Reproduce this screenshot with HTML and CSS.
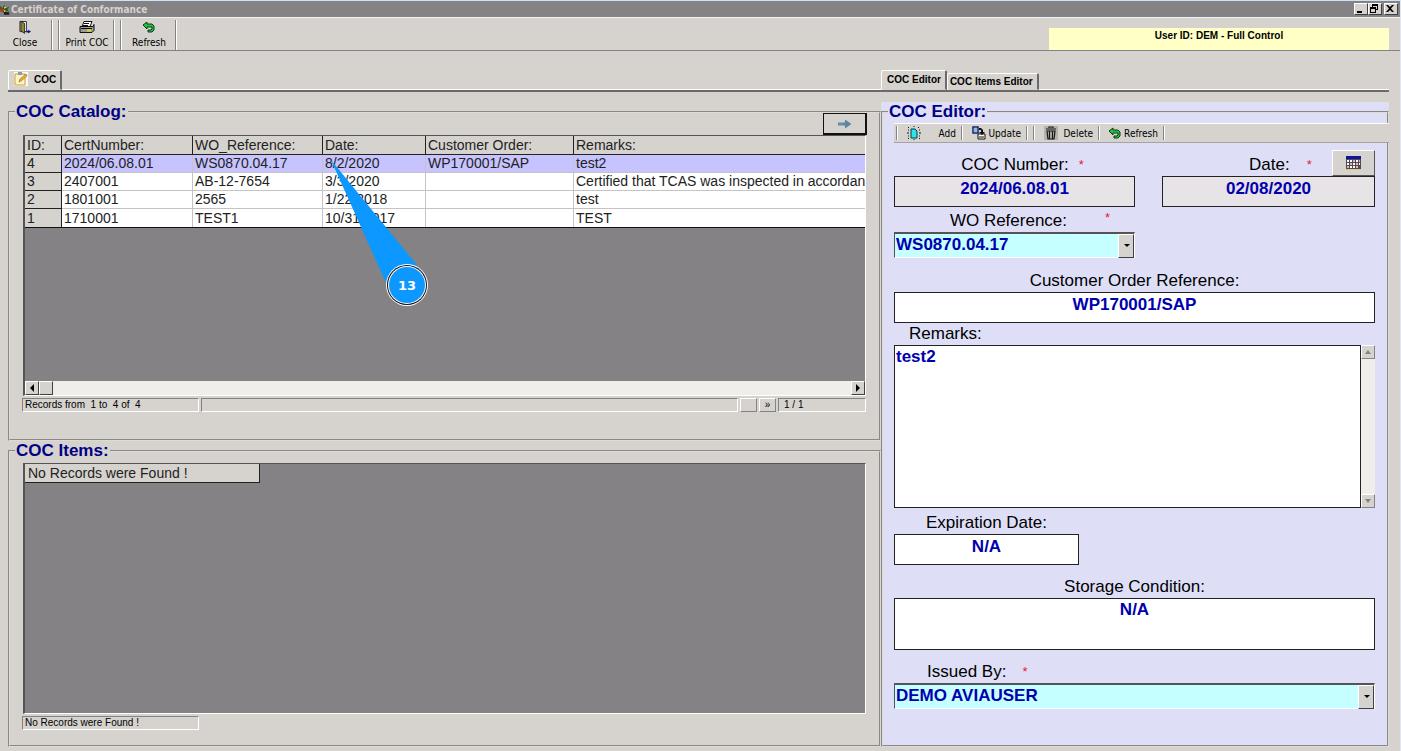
FILE: index.html
```
<!DOCTYPE html>
<html lang="en">
<head>
  <meta charset="UTF-8" />
  <meta name="viewport" content="width=device-width, initial-scale=1.0" />
  <title>Certificate of Conformance</title>
  <link rel="stylesheet" href="styles.css">
</head>
<body>
  <!-- shared icons -->
  <svg class="icon-defs" aria-hidden="true">
    <symbol id="icon-refresh" viewBox="0 0 12 12">
      <path d="M0 4l4-3v2h5l2 2v4l-2 2H5V9h3l1-1V6H4v2z" fill="#21c342" stroke="#0a3a14" stroke-width="1" />
    </symbol>
  </svg>

  <header class="title-bar">
    <svg class="app-icon" viewBox="0 0 12 14">
      <path d="M0 3l3 3 2-4 2 4 4-2-2 4 2 2-5-1-2 2-4-4z" fill="#2c5a1e" />
      <path d="M4 9l4 2 3 0v3H5z" fill="#1c1c1c" />
      <path d="M1 6l3 1-1 4-3-1z" fill="#c9301c" />
      <path d="M5 4l3 1-3 2zM4 8l3 1-2 2z" fill="#e6d84a" />
    </svg>
    <h1>Certificate of Conformance</h1>
    <div class="window-buttons">
      <button aria-label="Minimize"><svg viewBox="0 0 10 9"><path d="M2 7h5v2H2z" /></svg></button>
      <button aria-label="Restore"><svg viewBox="0 0 10 9"><path d="M3 0h6v6H7V5h1V2H4v1H3zM1 3h6v6H1zM2 5v3h4V5z" fill-rule="evenodd" /></svg></button>
      <button class="close" aria-label="Close window"><svg viewBox="0 0 10 9"><path d="M1 1h2l2 2 2-2h2L6 4.500l3 3.500H7L5 6 3 8H1l3-3.500z" /></svg></button>
    </div>
  </header>

  <div class="toolbar">
    <button class="tool">
      <svg viewBox="0 0 13 14">
        <path d="M1 1h7v11H1z" fill="#fff" stroke="#222" />
        <path d="M2 1l4 2v11l-4-3z" fill="#8c8a2c" stroke="#111" stroke-width="0.8" />
        <path d="M8 9v2h2v-1l3 2-3 2v-1H8z" fill="#10149c" />
      </svg>
      Close
    </button>
    <i class="sep"></i><i class="sep wide"></i>
    <button class="tool">
      <svg class="printer" viewBox="0 0 16 13">
        <path d="M5 1h8l-2 5H3z" fill="#fff" stroke="#111" />
        <path d="M1 6h13l1-2v6l-2 2H1z" fill="#9a9a96" stroke="#111" />
        <path d="M2 8h11M5 3h5M4 5h5" stroke="#111" />
        <path d="M8 9h4v2H8z" fill="#e8e21c" />
      </svg>
      Print COC
    </button>
    <i class="sep"></i><i class="sep wide"></i>
    <button class="tool">
      <svg viewBox="0 0 12 12"><use href="#icon-refresh" /></svg>
      Refresh
    </button>
    <i class="sep"></i>
    <div class="user-info">User ID: DEM - Full Control</div>
  </div>

  <main>
    <div class="left-side">
      <div class="tabs" role="tablist">
        <button class="tab active" role="tab" aria-selected="true">
          <svg viewBox="0 0 14 14">
            <path d="M0 0h14v14H0z" fill="#fbfaf4" />
            <path d="M1 2h10v11H1z" fill="#fff3c4" stroke="#c89b3c" />
            <path d="M4 0h4v3H4z" fill="#8c98ac" />
            <path d="M5 10l1-3 6-5 1 2-6 5z" fill="#f0b428" stroke="#7c6428" stroke-width="0.6" />
          </svg>
          COC
        </button>
      </div>

      <fieldset class="catalog">
        <legend>COC Catalog:</legend>
        <div class="catalog-top">
          <button class="next-button" aria-label="Next">
            <svg viewBox="0 0 14 10"><path d="M0 3.500h7V0.500l6.500 4.500L7 9.500v-3H0z" fill="#5a86a4" /><path d="M2 3v4M4 3v4" stroke="#8fb0c4" stroke-width="0.6" /></svg>
          </button>
        </div>
        <div class="grid">
          <table>
            <colgroup>
              <col class="col-id"><col class="col-cert"><col class="col-wo"><col class="col-date"><col class="col-order"><col>
            </colgroup>
            <thead>
              <tr><th>ID:</th><th>CertNumber:</th><th>WO_Reference:</th><th>Date:</th><th>Customer Order:</th><th>Remarks:</th></tr>
            </thead>
            <tbody>
              <tr class="selected"><th>4</th><td>2024/06.08.01</td><td>WS0870.04.17</td><td>8/2/2020</td><td>WP170001/SAP</td><td>test2</td></tr>
              <tr><th>3</th><td>2407001</td><td>AB-12-7654</td><td>3/3/2020</td><td></td><td>Certified that TCAS was inspected in accordan</td></tr>
              <tr><th>2</th><td>1801001</td><td>2565</td><td>1/22/2018</td><td></td><td>test</td></tr>
              <tr><th>1</th><td>1710001</td><td>TEST1</td><td>10/31/2017</td><td></td><td>TEST</td></tr>
            </tbody>
          </table>
          <div class="h-scroll">
            <button aria-label="Scroll left"><svg viewBox="0 0 8 8"><path d="M6 0v8L2 4z" /></svg></button>
            <span class="thumb"></span>
            <button class="end" aria-label="Scroll right"><svg viewBox="0 0 8 8"><path d="M2 0v8l4-4z" /></svg></button>
          </div>
        </div>
        <div class="status">
          <span class="cell records">Records from&nbsp; 1 to&nbsp; 4 of&nbsp; 4</span>
          <span class="cell message"></span>
          <button aria-label="Previous page"></button>
          <button aria-label="Next page">»</button>
          <span class="cell pages">1 / 1</span>
        </div>
      </fieldset>

      <fieldset class="items">
        <legend>COC Items:</legend>
        <div class="grid">
          <div class="empty">No Records were Found !</div>
        </div>
        <div class="status">
          <span class="cell records">No Records were Found !</span>
        </div>
      </fieldset>
    </div>

    <div class="right-side">
      <div class="tabs" role="tablist">
        <button class="tab active" role="tab" aria-selected="true">COC Editor</button>
        <button class="tab" role="tab" aria-selected="false">COC Items Editor</button>
      </div>

      <div class="editor-panel">
        <fieldset class="editor">
          <legend>COC Editor:</legend>
          <div class="editor-toolbar">
            <i class="sep"></i>
            <button class="add">
              <svg viewBox="0 0 14 14">
                <path d="M4 3h4l2 2v7H4z" fill="#2ce4ec" stroke="#063c44" />
                <path d="M1 1l1 1M12 1l-1 1M1 13l1-1M13 13l-1-1M0 7h2M12 7h2M7 0v1M7 13v1M1 4h1M12 4h1M1 10h1M12 10h1" stroke="#111" />
              </svg>
              Add
            </button>
            <i class="sep"></i>
            <button class="update">
              <svg viewBox="0 0 14 14">
                <path d="M1 1h5v6H1z" fill="#fff" stroke="#10206c" stroke-width="1.5" />
                <path d="M2 3h3M2 5h3" stroke="#1870c8" />
                <path d="M6 8h7v5H6z" fill="#fff" stroke="#111" />
                <path d="M7 11h5" stroke="#111" />
                <path d="M7 2h2l2 2v2h2l-3 3-3-3h2V4H7z" fill="#111" />
              </svg>
              Update
            </button>
            <i class="sep"></i><i class="sep wide"></i>
            <button class="delete">
              <svg viewBox="0 0 14 14">
                <path d="M0 0h14v14H0z" fill="#b4b2ac" />
                <path d="M5 2V1h4v1M2 3h10M3 5h8l-1 8H4zM5.500 5v8M8.500 5v8" fill="none" stroke="#151515" stroke-width="1.2" />
              </svg>
              Delete
            </button>
            <i class="sep"></i>
            <button class="refresh"><svg viewBox="0 0 12 12"><use href="#icon-refresh" /></svg>Refresh</button>
            <i class="sep"></i>
          </div>

          <form class="editor-form">
            <div class="row top-row">
              <div class="field number">
                <div class="label"><label for="coc-number">COC Number:</label><span class="required">*</span></div>
                <input type="text" id="coc-number" value="2024/06.08.01" readonly>
              </div>
              <div class="field date">
                <div class="label">
                  <label for="coc-date">Date:</label><span class="required">*</span>
                  <button type="button" class="calendar" aria-label="Pick a date">
                    <svg viewBox="0 0 15 14">
                      <path d="M0 0h15v14H0z" fill="#4a4a58" />
                      <path d="M0 0h15v3H0z" fill="#10149c" />
                      <path d="M1 4h2v2H1zM4 4h2v2H4zM10 4h2v2h-2zM1 7h2v2H1zM7 7h2v2H7zM13 7h1v2h-1zM4 10h2v2H4zM7 10h2v2H7z" fill="#fff" />
                      <path d="M7 4h2v2H7zM4 7h2v2H4zM10 7h2v2h-2zM13 4h1v2h-1zM1 10h2v2H1zM10 10h2v2h-2z" fill="#f2b0a8" />
                      <path d="M0 13h15v1H0z" fill="#d8d070" />
                    </svg>
                  </button>
                </div>
                <input type="text" id="coc-date" value="02/08/2020" readonly>
              </div>
            </div>

            <div class="field wo">
              <div class="label"><label for="wo-reference">WO Reference:</label><span class="required">*</span></div>
              <div class="combo">
                <select id="wo-reference"><option>WS0870.04.17</option></select>
              </div>
            </div>

            <div class="field order">
              <div class="label"><label for="customer-order">Customer Order Reference:</label></div>
              <input type="text" id="customer-order" value="WP170001/SAP">
            </div>

            <div class="field remarks">
              <div class="label"><label for="remarks">Remarks:</label></div>
              <div class="memo">
                <textarea id="remarks">test2</textarea>
                <div class="v-scroll">
                  <button type="button" aria-label="Scroll up"><svg viewBox="0 0 8 8"><path d="M1 6h6L4 2z" /></svg></button>
                  <button type="button" aria-label="Scroll down"><svg viewBox="0 0 8 8"><path d="M1 2h6L4 6z" /></svg></button>
                </div>
              </div>
            </div>

            <div class="field expiration">
              <div class="label"><label for="expiration">Expiration Date:</label></div>
              <input type="text" id="expiration" value="N/A">
            </div>

            <div class="field storage">
              <div class="label"><label for="storage">Storage Condition:</label></div>
              <textarea id="storage">N/A</textarea>
            </div>

            <div class="field issued">
              <div class="label"><label for="issued-by">Issued By:</label><span class="required">*</span></div>
              <div class="combo">
                <select id="issued-by"><option>DEMO AVIAUSER</option></select>
              </div>
            </div>
          </form>
        </fieldset>
      </div>
    </div>
  </main>

  <!-- step marker pointing at the selected row -->
  <svg class="callout" viewBox="0 0 100 150">
    <path d="M3 3L89 108 58 126z" fill="#0c98ff" />
    <circle cx="79" cy="128" r="21" fill="#fff" />
    <circle cx="79" cy="128" r="20" fill="#111" />
    <circle cx="79" cy="128" r="19" fill="#fff" />
    <circle cx="79" cy="128" r="18" fill="#0c98ff" />
    <text x="79" y="133" text-anchor="middle">13</text>
  </svg>
</body>
</html>
```
FILE: styles.css
```
/* Global Styling */
* {
  box-sizing: border-box;
}

body {
  margin: 0;
  min-height: 100vh;
  display: flex;
  flex-direction: column;
  background: #d6d3ce;
  border-top: 1px solid #cfe3f2;
  border-right: 1px solid #dfe8f2;
  font-family: "Liberation Sans", Arial, sans-serif;
  font-size: 10px;
  color: #000;
}

button,
input,
select,
textarea {
  font: inherit;
  color: inherit;
  margin: 0;
  padding: 0;
  border-radius: 0;
}

button {
  background: #d6d3ce;
  border: 0;
}

.icon-defs {
  position: absolute;
  width: 0;
  height: 0;
}

/* Title bar */
.title-bar {
  display: flex;
  align-items: center;
  height: 17px;
  background: #848284;
  border-bottom: 1px solid #f4f3f0;
  padding-right: 2px;
}

.app-icon {
  width: 10px;
  height: 14px;
}

.title-bar h1 {
  flex: 1;
  margin: 0 0 0 1px;
  font-family: "DejaVu Sans Condensed", "DejaVu Sans", sans-serif;
  font-size: 10px;
  font-weight: bold;
  color: #d6d3ce;
}

.window-buttons {
  display: flex;
}

.window-buttons button {
  display: flex;
  width: 14px;
  height: 12px;
  border: 1px solid;
  border-color: #fff #404040 #404040 #fff;
}

.window-buttons .close {
  margin-left: 2px;
}

.window-buttons svg {
  width: 10px;
  height: 9px;
}

/* Toolbar */
.toolbar {
  display: flex;
  height: 33px;
  border-bottom: 1px solid #848284;
  padding: 2px 11px 0 0;
  font-family: "DejaVu Sans Condensed", "DejaVu Sans", sans-serif;
}

.tool {
  width: 50px;
  display: flex;
  flex-direction: column;
  align-items: center;
  justify-content: space-between;
  line-height: 12px;
  padding-bottom: 1px;
  white-space: nowrap;
}

.tool svg {
  width: 12px;
  height: 14px;
}

.tool .printer {
  width: 16px;
}

.sep {
  width: 2px;
  margin: 0 1px;
  border-left: 1px solid #848284;
  border-right: 1px solid #fff;
}

.sep.wide {
  margin-left: 4px;
}

.toolbar .wide {
  margin-right: 2px;
}

.user-info {
  width: 340px;
  margin: 8px 0 0 auto;
  background: #ffffc6;
  font-family: "Liberation Sans", Arial, sans-serif;
  font-weight: bold;
  text-align: center;
  line-height: 16px;
}

/* Page halves */
main {
  flex: 1;
  display: grid;
  grid-template-columns: minmax(0, 1fr) 508px;
  padding: 19px 11px 4px 8px;
}

.left-side,
.right-side {
  display: flex;
  flex-direction: column;
}

/* Tabs */
.tabs {
  display: flex;
  align-items: flex-end;
  height: 22px;
  border-bottom: 2px solid #6b696b;
  box-shadow: inset 0 -1px #fff;
}

.tab {
  display: flex;
  align-items: center;
  gap: 6px;
  height: 17px;
  padding: 0 4px 0 2px;
  border: 1px solid;
  border-color: #fff #6b696b transparent #fff;
  border-right-width: 2px;
  border-radius: 2px 2px 0 0;
  font-weight: bold;
}

.tab.active {
  height: 20px;
  padding: 0 4px 2px 5px;
}

.tab svg {
  width: 14px;
  height: 14px;
}

/* Group boxes */
fieldset {
  display: flex;
  flex-direction: column;
  min-width: 0;
  margin: 0;
  padding: 0 13px;
  border: 2px groove #dedbd6;
}

legend {
  margin-left: -8px;
  padding: 0 1px;
  font-size: 17px;
  font-weight: bold;
  line-height: 20px;
  color: #000084;
}

.catalog {
  flex: 333 1 0;
  margin-top: 10px;
  padding-bottom: 27px;
}

.items {
  flex: 311 1 0;
  padding-bottom: 15px;
}

.catalog-top {
  display: flex;
  justify-content: flex-end;
  margin: -9px -1px 0 0;
}

.next-button {
  width: 44px;
  height: 22px;
  display: flex;
  align-items: center;
  justify-content: center;
  border: 1px solid #111;
  border-right-width: 2px;
  border-bottom-width: 2px;
}

.next-button svg {
  width: 14px;
  height: 10px;
}

/* Data grids */
.grid {
  flex: 1;
  display: flex;
  flex-direction: column;
  background: #848284;
  border: 1px solid;
  border-color: #555355 #fff #fff #555355;
  border-left-width: 2px;
  font-size: 14px;
}

.items .grid {
  margin-top: 2px;
}

table {
  width: 100%;
  table-layout: fixed;
  border-collapse: separate;
  border-spacing: 0;
  border-bottom: 1px solid #111;
}

.col-id {
  width: 37px;
}

.col-cert {
  width: 131px;
}

.col-wo {
  width: 130px;
}

.col-date {
  width: 103px;
}

.col-order {
  width: 148px;
}

th,
td {
  height: 18px;
  padding: 0 0 0 2px;
  overflow: hidden;
  white-space: nowrap;
  text-align: left;
  font-weight: normal;
  line-height: 17px;
  color: #222;
  border-right: 1px solid #c6c3c6;
  border-bottom: 1px solid #c6c3c6;
}

td {
  background: #fff;
}

th {
  background: #d6d3ce;
  border-color: #222;
}

thead th {
  height: 19px;
}

th:last-child,
td:last-child {
  border-right: 0;
}

tbody tr:last-child > * {
  border-bottom: 0;
}

.selected td {
  background: #c6c3ff;
}

.empty {
  width: 235px;
  padding-left: 3px;
  line-height: 18px;
  color: #222;
  background: #d6d3ce;
  border-right: 1px solid #222;
  border-bottom: 1px solid #222;
}

/* Scrollbars */
.h-scroll {
  display: flex;
  height: 14px;
  margin-top: auto;
  background: #efeeeb;
}

.h-scroll button,
.thumb,
.v-scroll button {
  display: flex;
  align-items: center;
  justify-content: center;
  width: 14px;
  background: #d6d3ce;
  border: 1px solid;
  border-color: #fff #404040 #404040 #fff;
}

.h-scroll .end {
  margin-left: auto;
}

.h-scroll svg,
.v-scroll svg {
  width: 8px;
  height: 8px;
}

/* Status line */
.status {
  display: flex;
  gap: 2px;
  height: 14px;
  margin: 2px 0 0 -1px;
}

.status .cell {
  padding-left: 2px;
  border: 1px solid;
  border-color: #848284 #fff #fff #848284;
  line-height: 12px;
  white-space: nowrap;
}

.status .records {
  width: 177px;
}

.status .message {
  flex: 1;
}

.status .pages {
  width: 88px;
  padding-left: 5px;
}

.status button {
  width: 17px;
  border: 1px solid;
  border-color: #fff #848284 #848284 #fff;
  line-height: 10px;
}

/* Editor */
.editor-panel {
  flex: 1;
  display: flex;
  margin-top: 10px;
  background: #dedff7;
}

.editor {
  flex: 1;
  padding: 0 13px 36px 12px;
}

.editor legend {
  margin-left: -7px;
}

.editor-toolbar {
  display: flex;
  height: 20px;
  margin: 1px -15px 0 -1px;
  padding: 2px 1px;
  background: #d6d3ce;
  border-top: 1px solid #fff;
  border-bottom: 1px solid #a5a2a5;
  font-family: "DejaVu Sans Condensed", "DejaVu Sans", sans-serif;
}

.editor-toolbar button {
  display: flex;
  align-items: center;
  justify-content: space-between;
  width: 61px;
  padding: 0 4px 0 8px;
}

.editor-toolbar svg {
  width: 14px;
  height: 14px;
}

.editor-toolbar .refresh svg {
  width: 12px;
  height: 12px;
}

.editor-form {
  flex: 1;
  display: flex;
  flex-direction: column;
  padding-top: 7px;
  margin-right: -1px;
  margin-left: -1px;
}

.row {
  display: flex;
  justify-content: space-between;
  gap: 26px;
}

.field {
  display: flex;
  flex-direction: column;
  font-size: 17px;
}

.label {
  display: flex;
  align-items: flex-end;
  justify-content: center;
  gap: 10px;
  height: 22px;
  line-height: 22px;
}

.required {
  font-size: 13px;
  color: #e0203c;
}

.number,
.wo {
  width: 241px;
}

.date {
  width: 213px;
}

.top-row .label {
  height: 26px;
}

.number .label {
  padding-left: 16px;
}

.date .label {
  padding-left: 87px;
  gap: 17px;
}

.calendar {
  display: flex;
  align-items: center;
  justify-content: center;
  flex: none;
  width: 43px;
  height: 26px;
  margin-left: auto;
  border: 1px solid;
  border-color: #fff #555355 #555355 #fff;
}

.calendar svg {
  width: 15px;
  height: 14px;
}

.wo {
  margin-top: 3px;
}

.wo .label {
  align-items: flex-start;
  gap: 38px;
  padding-left: 31px;
}

.wo .required {
  line-height: 16px;
}

.order {
  margin-top: 12px;
}

.storage,
.issued {
  margin-top: 11px;
}

.remarks {
  flex: 1;
}

.remarks .label {
  justify-content: flex-start;
  padding-left: 15px;
}

.expiration {
  width: 185px;
  margin-top: 4px;
}

.issued .label {
  justify-content: flex-start;
  gap: 16px;
  padding-left: 33px;
}

.field input,
.field textarea,
.field select {
  width: 100%;
  border: 1px solid #222;
  background: #fff;
  color: #0000ad;
  font-weight: bold;
}

.field input {
  height: 31px;
  padding-bottom: 6px;
  text-align: center;
}

.field input[readonly] {
  background: #e7e3e7;
}

.field textarea {
  display: block;
  line-height: 22px;
  resize: none;
}

.storage textarea {
  height: 52px;
  text-align: center;
}

.memo {
  flex: 1;
  display: flex;
}

.memo textarea {
  flex: 1;
  padding-left: 1px;
}

.v-scroll {
  display: flex;
  flex-direction: column;
  justify-content: space-between;
  background: #efeeeb;
}

.v-scroll button {
  height: 14px;
  border-color: #fff #848284 #848284 #fff;
}

.v-scroll svg {
  fill: #848284;
}

/* Drop-downs */
.combo {
  position: relative;
}

.field select {
  display: block;
  height: 26px;
  padding: 0 16px 2px 1px;
  appearance: none;
  background: #c6ffff;
  border-width: 2px 1px 1px;
  border-color: #555355 #fff #fff #555355;
}

.combo::before {
  content: "";
  position: absolute;
  top: 2px;
  right: 1px;
  width: 14px;
  height: 22px;
  background: #d6d3ce;
  border: 1px solid;
  border-color: #fff #404040 #404040 #fff;
  pointer-events: none;
}

.combo::after {
  content: "";
  position: absolute;
  top: 12px;
  right: 5px;
  border: 3px solid transparent;
  border-top-color: #000;
  border-bottom: 0;
  pointer-events: none;
}

/* Step marker */
.callout {
  position: absolute;
  top: 157px;
  left: 328px;
  width: 100px;
  height: 150px;
  pointer-events: none;
}

.callout text {
  font-family: "DejaVu Sans", sans-serif;
  font-size: 13px;
  font-weight: bold;
  fill: #fff;
}
```
